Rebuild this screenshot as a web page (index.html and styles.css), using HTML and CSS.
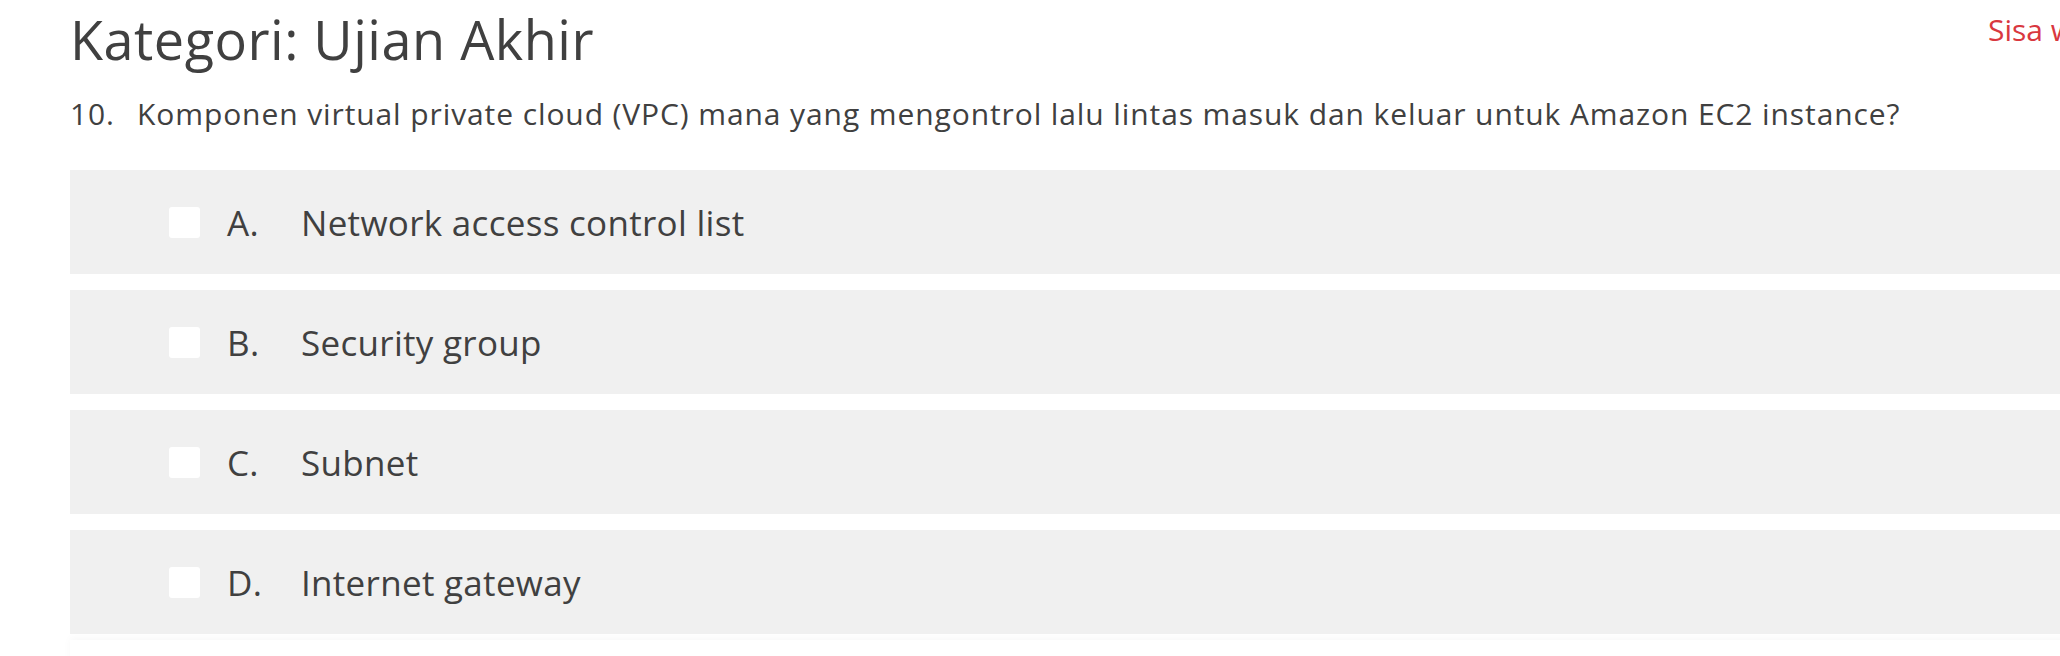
FILE: index.html
```html
<!DOCTYPE html>
<html lang="id">

<head>
    <meta charset="UTF-8">
    <meta name="viewport" content="width=device-width, initial-scale=1.0">
    <title>Ujian Akhir</title>
    <link rel="stylesheet" href="styles.css">
</head>

<body>
    <div class="page">
        <div class="header">
            <h1 class="category">Kategori: Ujian Akhir</h1>
            <div class="timer">Sisa waktu 00:58:21</div>
        </div>

        <div class="question">
            <span class="q-number">10.</span>
            <span class="q-text">Komponen virtual private cloud (VPC) mana yang mengontrol lalu lintas masuk dan keluar untuk Amazon EC2 instance?</span>
        </div>

        <div class="options">
            <label class="option">
                <span class="check"></span>
                <span class="opt-letter">A.</span>
                <span class="opt-text">Network access control list</span>
            </label>
            <label class="option">
                <span class="check"></span>
                <span class="opt-letter">B.</span>
                <span class="opt-text">Security group</span>
            </label>
            <label class="option">
                <span class="check"></span>
                <span class="opt-letter">C.</span>
                <span class="opt-text">Subnet</span>
            </label>
            <label class="option">
                <span class="check"></span>
                <span class="opt-letter">D.</span>
                <span class="opt-text">Internet gateway</span>
            </label>
        </div>

        <div class="footer-bar"></div>
    </div>
</body>

</html>
```

FILE: styles.css
```css
body {
    margin: 0;
    font-family: "Open Sans", Lato, sans-serif;
    color: #404040;
    background: #fff;
    overflow: hidden;
}

.page {
    width: 2300px;
    padding: 0 0 0 70px;
}

.header {
    display: grid;
    grid-template-columns: 1918px auto;
    align-items: start;
}

.category {
    margin: 0;
    padding-top: 4px;
    font-size: 54px;
    font-weight: 400;
    line-height: 70px;
    letter-spacing: 0.5px;
}

.timer {
    padding-top: 10px;
    font-size: 30px;
    line-height: 40px;
    color: #d9383f;
    white-space: nowrap;
}

.question {
    display: flex;
    margin-top: 20px;
    font-size: 30px;
    line-height: 40px;
    letter-spacing: 0.9px;
}

.q-number {
    width: 67px;
}

.options {
    display: flex;
    flex-direction: column;
    gap: 16px;
    margin-top: 36px;
}

.option {
    display: flex;
    align-items: center;
    height: 104px;
    padding-left: 99px;
    background: #f0f0f0;
    font-size: 35px;
    letter-spacing: 0.3px;
}

.check {
    width: 31px;
    height: 31px;
    border-radius: 3px;
    background: #fff;
    margin-right: 27px;
}

.opt-letter {
    width: 74px;
}

.footer-bar {
    height: 40px;
    margin-top: 6px;
    background: #fff;
    box-shadow: 0 -2px 8px rgba(0, 0, 0, 0.03);
}
```
